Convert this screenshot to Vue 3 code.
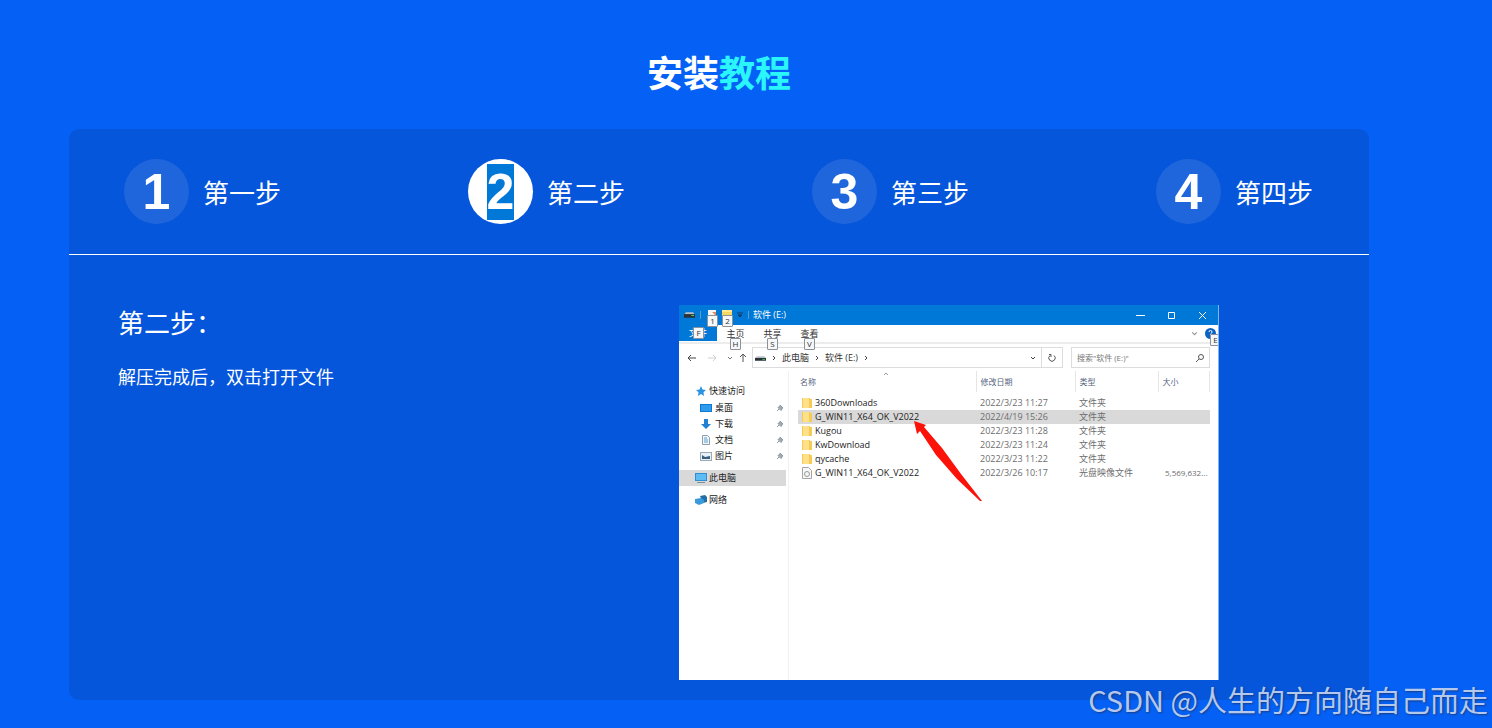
<script setup>
import { ref } from 'vue'

const steps = ['第一步', '第二步', '第三步', '第四步']
const active = ref(1)

const tabs = [
  { label: '主页', tip: 'H' },
  { label: '共享', tip: 'S' },
  { label: '查看', tip: 'V' },
]
const places = [
  { label: '桌面', icon: 'desktop' },
  { label: '下载', icon: 'download' },
  { label: '文档', icon: 'document' },
  { label: '图片', icon: 'picture' },
]
const files = [
  { name: '360Downloads', date: '2022/3/23 11:27', type: '文件夹', size: '' },
  { name: 'G_WIN11_X64_OK_V2022', date: '2022/4/19 15:26', type: '文件夹', size: '', selected: true },
  { name: 'Kugou', date: '2022/3/23 11:28', type: '文件夹', size: '' },
  { name: 'KwDownload', date: '2022/3/23 11:24', type: '文件夹', size: '' },
  { name: 'qycache', date: '2022/3/23 11:22', type: '文件夹', size: '' },
  { name: 'G_WIN11_X64_OK_V2022', date: '2022/3/26 10:17', type: '光盘映像文件', size: '5,569,632...', disc: true },
]
</script>

<template>
  <main class="page">
    <h1 class="title">安装<span>教程</span></h1>

    <section class="panel">
      <nav class="steps" aria-label="安装步骤">
        <button
          v-for="(step, i) in steps"
          :key="step"
          type="button"
          class="step"
          :class="{ active: i === active }"
          @click="active = i"
        >
          <span class="circle"><span class="num">{{ i + 1 }}</span></span>
          <span class="step-label">{{ step }}</span>
        </button>
      </nav>

      <div class="body">
        <div class="copy">
          <h2>第二步：</h2>
          <p>解压完成后，双击打开文件</p>
        </div>

        <div class="window">
          <header class="titlebar">
            <svg class="drive" viewBox="0 0 12 8"><path d="M2 1h8l2 3H0z" fill="#b9c0c4" /><rect y="3" width="12" height="4" fill="#283238" /><rect x="8" y="4" width="3" height="1" fill="#62e06d" /></svg>
            <i class="bar"></i>
            <span class="quick">
              <svg viewBox="0 0 10 10"><path d="M1 0h8v10H1z" fill="#f5f5f5" /><path d="M5 2h4v4z" fill="#e58a5b" /></svg>
              <kbd>1</kbd>
            </span>
            <span class="quick">
              <svg viewBox="0 0 10 10"><path d="M0 0h10v9H0z" fill="#f6d860" /><path d="M0 0h10v2H0z" fill="#ffe98c" /></svg>
              <kbd>2</kbd>
            </span>
            <svg class="tiny" viewBox="0 0 6 6"><path d="M0 1h6M1 3h4L3 5z" stroke="#143d66" fill="#143d66" /></svg>
            <i class="bar"></i>
            <span class="win-title">软件 (E:)</span>
            <span class="controls">
              <button type="button" aria-label="最小化"><svg viewBox="0 0 9 9"><path d="M0 4.500h9" /></svg></button>
              <button type="button" aria-label="最大化"><svg viewBox="0 0 9 9"><path d="M1.500 1.500h6v6h-6z" /></svg></button>
              <button type="button" aria-label="关闭"><svg viewBox="0 0 9 9"><path d="M1 1l7 7M8 1L1 8" /></svg></button>
            </span>
          </header>

          <div class="tabs">
            <button type="button" class="tab file">文件<kbd>F</kbd></button>
            <button v-for="tab in tabs" :key="tab.tip" type="button" class="tab">{{ tab.label }}<kbd>{{ tab.tip }}</kbd></button>
            <span class="help">
              <svg class="chev" viewBox="0 0 6 6"><path d="M1 2l2 2 2-2" fill="none" stroke="#999" /></svg>
              <svg class="ask" viewBox="0 0 11 11"><circle cx="5.500" cy="5.500" r="5.500" fill="#0a63c2" /><path d="M4 4q0-1.500 1.500-1.500T7 4q0 1-1.500 2v1M5.500 8v1" fill="none" stroke="#fff" /></svg>
              <kbd>E</kbd>
            </span>
          </div>

          <div class="address">
            <span class="arrows">
              <svg viewBox="0 0 10 10"><path d="M9 5H1M4 2L1 5l3 3" stroke="#444" /></svg>
              <svg viewBox="0 0 10 10"><path d="M1 5h8M6 2l3 3-3 3" stroke="#d0d0d0" /></svg>
              <svg class="small" viewBox="0 0 6 6"><path d="M1 2l2 2 2-2" stroke="#777" /></svg>
              <svg viewBox="0 0 10 10"><path d="M5 9V1M2 4l3-3 3 3" stroke="#555" /></svg>
            </span>
            <div class="path">
              <svg class="drive" viewBox="0 0 12 8"><path d="M2 2h8l2 2H0z" fill="#b9c0c4" /><rect y="4" width="12" height="3" fill="#283238" /><rect x="8" y="5" width="3" height="1" fill="#4cc957" /></svg>
              <svg class="next" viewBox="0 0 6 6"><path d="M2 1l2 2-2 2" /></svg>
              <span>此电脑</span>
              <svg class="next" viewBox="0 0 6 6"><path d="M2 1l2 2-2 2" /></svg>
              <span>软件 (E:)</span>
              <svg class="next" viewBox="0 0 6 6"><path d="M2 1l2 2-2 2" /></svg>
              <svg class="next drop" viewBox="0 0 6 6"><path d="M1 2l2 2 2-2" /></svg>
              <button type="button" class="refresh" aria-label="刷新"><svg viewBox="0 0 10 10"><path d="M3 2.500A3.200 3.200 0 1 0 7 2.500M2 1.500h2v2.500" /></svg></button>
            </div>
            <label class="search">
              <input type="text" placeholder="搜索&quot;软件 (E:)&quot;" aria-label="搜索" />
              <svg viewBox="0 0 10 10"><circle cx="6" cy="4" r="2.500" /><path d="M4 6L1 9" /></svg>
            </label>
          </div>

          <div class="content">
            <aside class="side">
              <div class="place root">
                <svg viewBox="0 0 12 12"><path d="M6 1l1.500 3.500L11 5 8.500 7.300 9 11 6 9l-3 2 .5-3.700L1 5l3.500-.5z" fill="#2b93e0" /></svg>
                快速访问
              </div>
              <div v-for="p in places" :key="p.label" class="place">
                <svg v-if="p.icon === 'desktop'" viewBox="0 0 12 12"><rect y="2" width="12" height="8" fill="#1177cf" /><rect x="1" y="3" width="10" height="6" fill="#2f9bed" /></svg>
                <svg v-else-if="p.icon === 'download'" viewBox="0 0 12 12"><path d="M4 1h4v5h3l-5 5-5-5h3z" fill="#2181d3" /></svg>
                <svg v-else-if="p.icon === 'document'" viewBox="0 0 12 12"><path d="M2.500 1.500h5l2 2v7h-7z" fill="#f4f8fb" stroke="#8ba0ae" /><path d="M4 4h3M4 6h4M4 8h4" stroke="#5f9dca" /></svg>
                <svg v-else viewBox="0 0 12 12"><rect x=".5" y="2.500" width="11" height="8" fill="#e7f1f7" stroke="#9babb5" /><path d="M2 9V5l3 2 5-1v3z" fill="#38607c" /></svg>
                {{ p.label }}
                <svg class="pin" viewBox="0 0 8 8"><path d="M4 1l3 3-1 .5-1 2-3-3 2-1zM3 5L1 7" fill="#a3acb4" stroke="#8d979f" /></svg>
              </div>
              <div class="place root chosen">
                <svg viewBox="0 0 12 12"><rect y="1" width="12" height="8" fill="#2f8dd0" /><rect x="1" y="2" width="10" height="6" fill="#5dbcf4" /><path d="M2 10.500h8" stroke="#7a8e9d" /></svg>
                此电脑
              </div>
              <div class="place root">
                <svg viewBox="0 0 12 12"><path d="M5 2l5-1 2 2v5l-4 1z" fill="#236fa9" /><path d="M0 5l6-1 3 2v3l-5 2-4-2z" fill="#3a9bdc" /></svg>
                网络
              </div>
            </aside>

            <div class="list">
              <table>
                <colgroup><col class="c-name" /><col class="c-date" /><col class="c-type" /><col /></colgroup>
                <thead>
                  <tr>
                    <th>名称<svg class="sort" viewBox="0 0 6 4"><path d="M1 3l2-2 2 2" /></svg></th>
                    <th>修改日期</th><th>类型</th><th>大小</th>
                  </tr>
                </thead>
                <tbody>
                  <tr v-for="f in files" :key="f.date" :class="{ selected: f.selected }">
                    <td class="name">
                      <svg v-if="f.disc" viewBox="0 0 10 12"><path d="M.5.500h6l3 3v8h-9z" fill="#f7f7f7" stroke="#a5a5a5" /><circle cx="5" cy="7" r="2.500" fill="none" stroke="#999" /></svg>
                      <svg v-else viewBox="0 0 10 12"><path d="M0 1h8v1h2v9H0z" fill="#f4cb55" /><path d="M1 1h6v10H1z" fill="#ffe08a" /></svg>
                      {{ f.name }}
                    </td>
                    <td>{{ f.date }}</td>
                    <td>{{ f.type }}</td>
                    <td class="size">{{ f.size }}</td>
                  </tr>
                </tbody>
              </table>
            </div>
          </div>

          <svg class="pointer" viewBox="0 0 69 82"><path d="M0 0L12 4L10 6L28 27L47 53L68 80H66L43 58L22 34L6 10L3 13z" fill="#fb1208" /></svg>
        </div>
      </div>
    </section>

    <div class="watermark">CSDN @人生的方向随自己而走</div>
  </main>
</template>

<style>
body {
  background: #0561f5;
}
</style>

<style scoped>
* {
  box-sizing: border-box;
}
.page {
  position: relative;
  min-height: 100vh;
  padding: 44px 123px 28px 69px;
  background: #0561f5;
  color: #fff;
  font-family: "Noto Sans CJK SC", sans-serif;
}
button {
  border: 0;
  padding: 0;
  background: none;
  color: inherit;
  font: inherit;
}
svg {
  flex: none;
  display: block;
}
.title {
  margin: 0 0 31px;
  font-size: 36px;
  line-height: 54px;
  font-weight: 700;
  text-align: center;
}
.title span {
  color: #2af5fb;
}
.panel {
  border-radius: 10px;
  background: #0556db;
}
.steps {
  display: flex;
  justify-content: space-between;
  padding: 30px 56px 30px 55px;
  border-bottom: 1px solid #fff;
}
.step {
  display: flex;
  align-items: center;
  gap: 14px;
  font-size: 26px;
  line-height: 40px;
}
.circle {
  display: flex;
  align-items: center;
  justify-content: center;
  width: 65px;
  height: 65px;
  border-radius: 50%;
  background: #1f66dd;
  font: 700 50px/56px "Liberation Sans", Arial, sans-serif;
}
.active .circle {
  background: #fff;
}
.active .num {
  background: #0078d7;
}
.body {
  display: grid;
  grid-template-columns: 1fr 540px;
  padding: 50px 150px 20px 49px;
}
h2 {
  margin: 0;
  font-size: 26px;
  line-height: 34px;
  font-weight: 400;
}
.copy p {
  margin: 23px 0 0;
  font-size: 18px;
  line-height: 28px;
}
.window {
  position: relative;
  display: flex;
  flex-direction: column;
  min-height: 375px;
  overflow: hidden;
  background: #fff;
  border-right: 1px solid #7ab8ee;
  color: #333;
  font: 9px/14px "Open Sans", "Noto Sans CJK SC", sans-serif;
}
kbd {
  position: absolute;
  z-index: 1;
  width: 11px;
  height: 12px;
  border: 1px solid #8c9299;
  border-radius: 1px;
  background: #f6f7f9;
  color: #333;
  font: 8px/10px "Open Sans", sans-serif;
  text-align: center;
}
.titlebar {
  display: flex;
  align-items: center;
  height: 20px;
  padding-left: 5px;
  background: #0078d7;
  color: #fff;
}
.drive {
  width: 11px;
  height: 8px;
}
.bar {
  width: 1px;
  height: 8px;
  margin: 0 6px 0 5px;
  background: #5f9ac9;
}
.quick {
  position: relative;
  margin-right: 5px;
}
.quick svg {
  width: 10px;
  height: 10px;
}
.quick kbd {
  top: 5px;
  left: 0;
}
.tiny {
  width: 6px;
  height: 6px;
}
.tiny + .bar {
  margin-right: 4px;
}
.controls {
  display: flex;
  margin-left: auto;
}
.controls button {
  display: flex;
  align-items: center;
  justify-content: center;
  width: 31px;
  height: 20px;
}
.controls svg {
  width: 9px;
  height: 9px;
  fill: none;
  stroke: #fff;
}
.tabs {
  display: flex;
  height: 19px;
  border-bottom: 2px solid #ececec;
}
.tab {
  position: relative;
  width: 37px;
  height: 17px;
}
.tab kbd {
  top: 13px;
  left: 13px;
}
.tab.file {
  width: 38px;
  height: 16px;
  background: #0078d7;
  color: #fff;
}
.tab.file kbd {
  top: 2px;
  left: 14px;
}
.help {
  position: relative;
  display: flex;
  align-items: center;
  gap: 7px;
  margin-left: auto;
  padding-right: 2px;
}
.chev {
  width: 7px;
  height: 7px;
}
.ask {
  width: 11px;
  height: 11px;
}
.help kbd {
  top: 9px;
  right: -3px;
}
.address {
  display: flex;
  gap: 8px;
  height: 27px;
  padding: 3px 8px;
}
.arrows {
  display: flex;
  align-items: center;
  gap: 10px;
  width: 57px;
}
.arrows svg {
  width: 10px;
  height: 10px;
  fill: none;
}
.arrows .small {
  width: 6px;
  height: 6px;
  margin-right: -5px;
}
.path {
  display: flex;
  flex: 1;
  align-items: center;
  gap: 5px;
  padding-left: 2px;
  border: 1px solid #dcdcdc;
}
.next {
  width: 6px;
  height: 6px;
  fill: none;
  stroke: #444;
}
.drop {
  margin-left: auto;
}
.refresh {
  display: flex;
  align-items: center;
  justify-content: center;
  width: 21px;
  height: 100%;
  border-left: 1px solid #dcdcdc;
}
.refresh svg,
.search svg {
  width: 10px;
  height: 10px;
  fill: none;
  stroke: #555;
}
.search {
  display: flex;
  align-items: center;
  width: 139px;
  padding: 0 4px 0 5px;
  border: 1px solid #dcdcdc;
}
.search input {
  flex: 1;
  min-width: 0;
  padding: 0;
  border: 0;
  background: none;
  font: 8px/14px "Open Sans", "Noto Sans CJK SC", sans-serif;
}
.search input::placeholder {
  color: #777;
}
.content {
  display: flex;
  flex: 1;
}
.side {
  width: 110px;
  padding: 12px 2px 0 0;
  border-right: 1px solid #f0f0f0;
}
.place {
  display: flex;
  align-items: center;
  gap: 3px;
  height: 16px;
  padding: 0 2px 0 21px;
  color: #222;
}
.place svg {
  width: 12px;
  height: 12px;
}
.place .pin {
  width: 8px;
  height: 8px;
  margin-left: auto;
}
.root {
  padding-left: 16px;
  gap: 2px;
}
.root + .place {
  margin-top: 1px;
}
.place + .root {
  margin-top: 6px;
}
.chosen {
  background: #d9d9d9;
}
.list {
  flex: 1;
  padding: 0 8px 0 9px;
}
table {
  width: 100%;
  table-layout: fixed;
  border-collapse: collapse;
}
.c-name {
  width: 178px;
}
.c-date {
  width: 99px;
}
.c-type {
  width: 83px;
}
th {
  position: relative;
  height: 21px;
  padding: 0 0 0 4px;
  border-right: 1px solid #e5e5e5;
  color: #55647d;
  font-size: 8px;
  font-weight: 400;
  text-align: left;
}
th:first-child {
  padding-left: 2px;
}
thead::after {
  content: "";
  display: block;
  height: 4px;
}
.sort {
  position: absolute;
  top: 1px;
  left: 48%;
  width: 6px;
  height: 4px;
  fill: none;
  stroke: #999;
}
td {
  height: 14px;
  padding: 0 0 0 4px;
  color: #6d6d6d;
  white-space: nowrap;
  line-height: 14px;
}
.name {
  display: flex;
  align-items: center;
  gap: 3px;
  color: #222;
}
.name svg {
  width: 10px;
  height: 12px;
}
.size {
  padding: 0 2px 0 0;
  font-size: 8px;
  text-align: right;
}
.selected {
  background: #d9d9d9;
}
.pointer {
  position: absolute;
  top: 116px;
  left: 235px;
  width: 69px;
  height: 82px;
}
.watermark {
  position: absolute;
  right: 4px;
  bottom: 7px;
  color: #b4c8ee;
  font-size: 29px;
  line-height: 44px;
  text-shadow: 1px 1px 2px #173d86;
}
</style>
